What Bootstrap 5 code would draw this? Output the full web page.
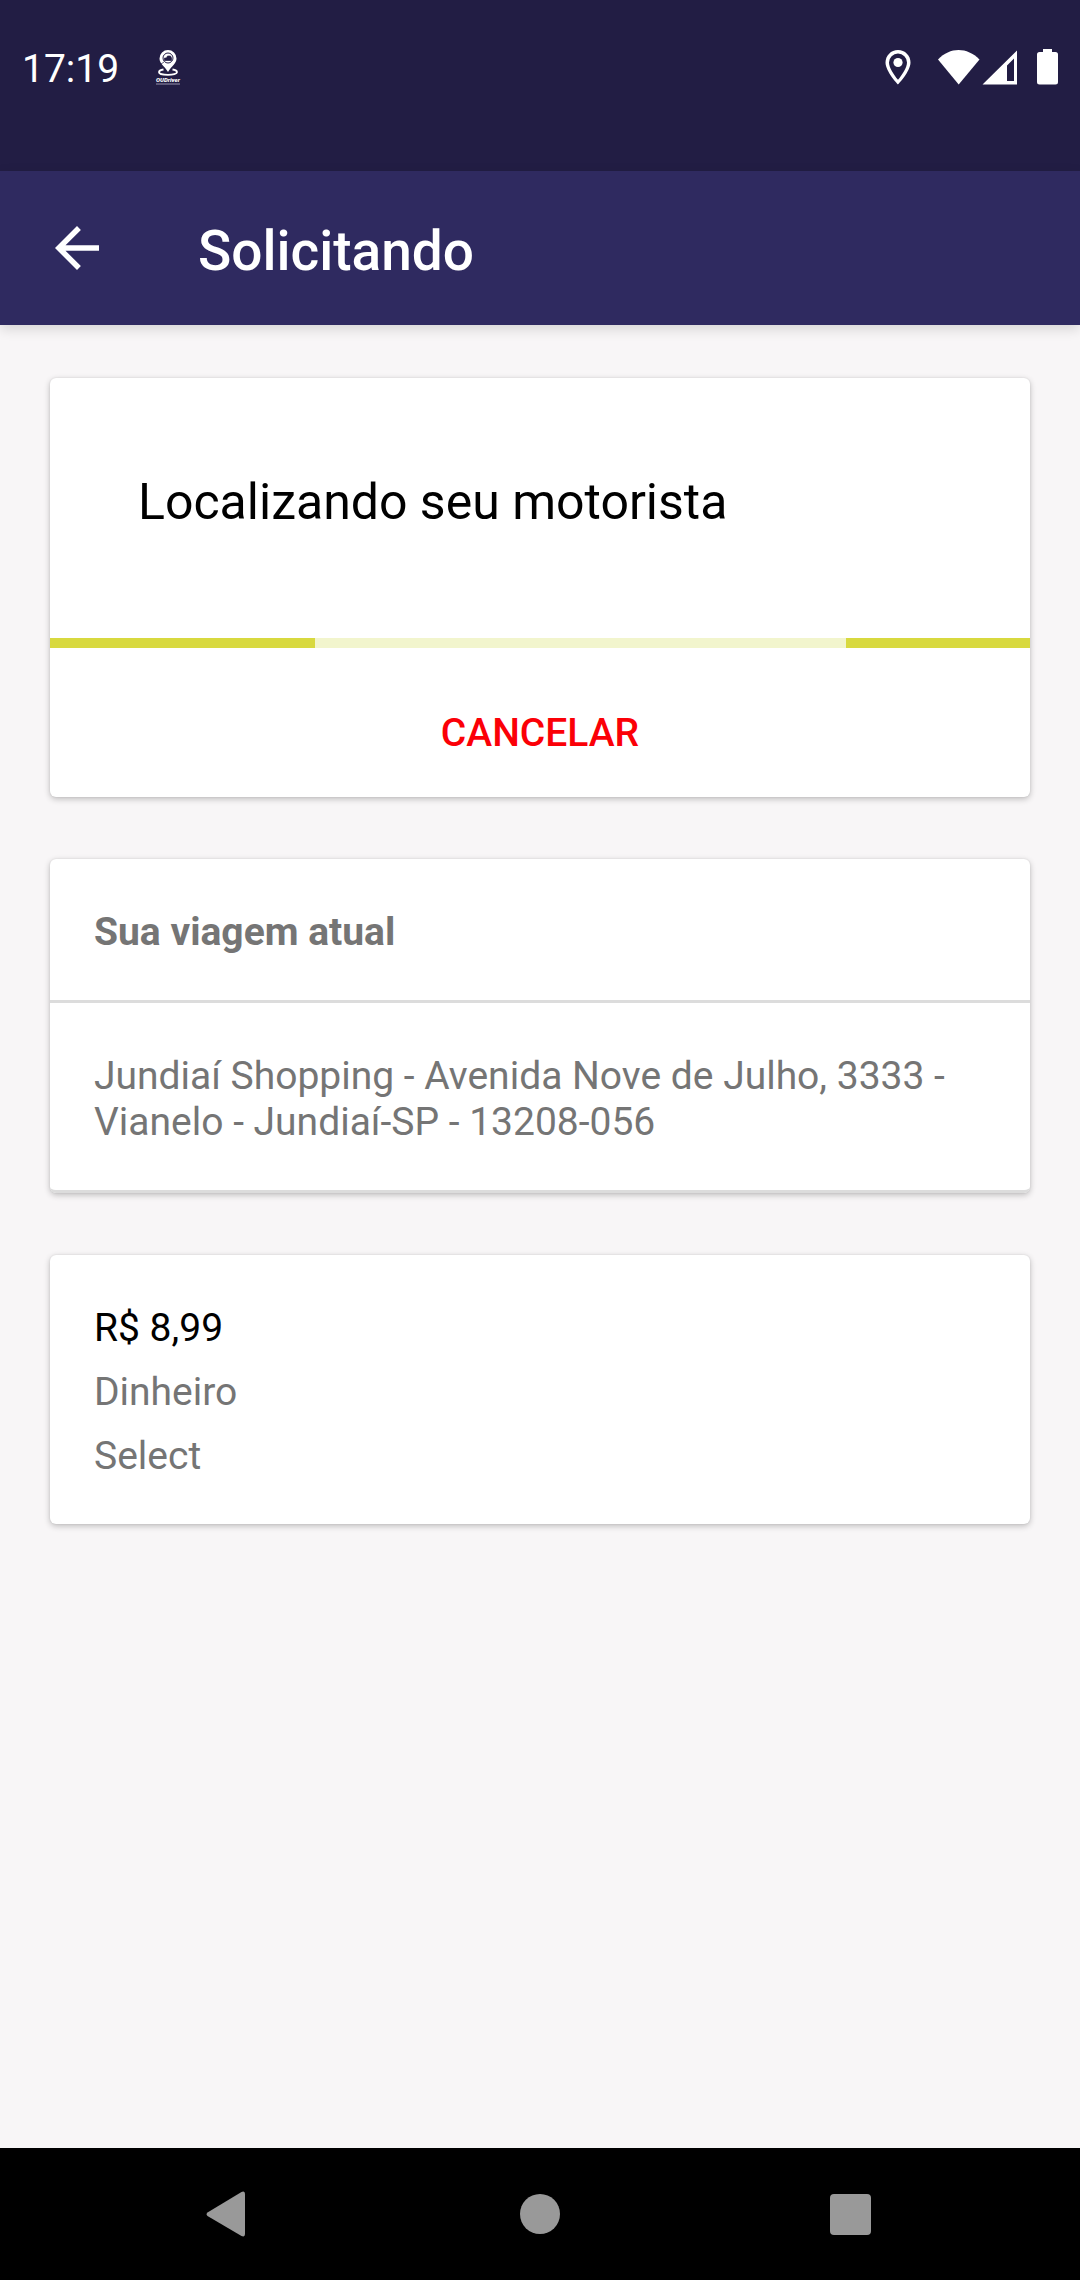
<!DOCTYPE html>
<html lang="pt-BR">
<head>
<meta charset="utf-8">
<meta name="viewport" content="width=device-width, initial-scale=1">
<title>Solicitando</title>
<link href="https://cdn.jsdelivr.net/npm/bootstrap@5.3.0/dist/css/bootstrap.min.css" rel="stylesheet">
<style>
  body { font-family: Roboto, "Noto Sans", sans-serif; font-size: 39px; line-height: 46px; background: #f8f6f7; color: #757575; }
  svg { display: block; flex: none; }
  .status-bar { background: #221d44; color: #fff; padding: 46px 22px 79px 22px; }
  .status-bar .icons-left { margin-left: 35px; }
  .app-bar { background: #2f2a60; color: #fff; height: 154px; padding: 0 44px; box-shadow: 0 4px 12px rgba(0,0,0,.14); }
  .app-bar h1 { font-size: 55px; line-height: 64px; font-weight: 500; padding-top: 6px; margin-left: 88px; }
  .back-link { width: 66px; height: 66px; color: #fff; }
  main { padding: 53px 50px; gap: 62px; }
  .panel { --bs-card-border-width: 0px; --bs-card-border-radius: 6px; --bs-card-color: #757575; box-shadow: 0 2px 6px rgba(0,0,0,.24), 0 0 2px rgba(0,0,0,.1); }
  .panel-part { padding: 50px 44px 45px; }
  .panel-rule { border-bottom: 3px solid #dcdcdc; }
  .panel-rule:last-child { border-radius: 0 0 6px 6px; }
  .panel h2, .panel p { font-size: 39px; line-height: 46px; }
  .panel .search-title { font-size: 50px; line-height: 58px; padding: 95px 88px 107px; color: #000; font-weight: 400; }
  .search-progress { height: 10px; border-radius: 0; background: #f2f5cd; }
  .search-progress .progress-bar { background: #d8d93f; }
  .cancel-btn { font-size: 39px; line-height: 46px; font-weight: 500; color: #fb0007; border: 0; border-radius: 0 0 6px 6px; padding: 62px 44px 41px; }
  .price { color: #000; }
  .details { gap: 18px; }
  .nav-bar { background: #000; height: 132px; padding: 0 75px; }
  .nav-bar .btn { color: #999; border: 0; }
</style>
</head>
<body>
<div class="d-flex flex-column min-vh-100">
  <div class="status-bar d-flex align-items-center justify-content-between">
    <div class="d-flex align-items-center">
      <span>17:19</span>
      <svg class="icons-left" width="30" height="40" viewBox="0 0 30 40" aria-hidden="true">
        <path d="M14 1a8.500 8.500 0 0 0-8.500 8.500c0 5 4.500 7 8.500 13.500 4-6.500 8.500-8.500 8.500-13.500A8.500 8.500 0 0 0 14 1z" fill="#fff"/>
        <circle cx="14" cy="9" r="5" fill="none" stroke="#221d44" stroke-width="1"/>
        <path d="M10.500 9h2l1-2h3l1 2v2.500h-7zM5.500 16l4.500-3" fill="#221d44" stroke="#221d44" stroke-width=".7"/>
        <path d="M9.500 20.500c-3 .5-4.500 1.400-4.500 2.700 0 1.500 4 2.600 9 2.600s9-1.100 9-2.600c0-1.300-1.500-2.200-4.500-2.700" fill="none" stroke="#fff" stroke-width="1.800"/>
        <text x="14" y="33" text-anchor="middle" font-size="6" font-weight="900" font-style="italic" fill="#fff">OUDriver</text>
        <path d="M2 35h24" stroke="#9793ad" stroke-width="1"/>
      </svg>
    </div>
    <svg width="176" height="40" viewBox="0 0 176 40" fill="#fff" role="img" aria-label="Localização, Wi-Fi, sinal e bateria">
      <path fill-rule="evenodd" d="M16 1C9 1 3.500 6.500 3.500 13.500 3.500 22.500 16 35.500 16 35.500s12.500-13 12.500-22C28.500 6.500 23 1 16 1zm0 3.500a9 9 0 0 1 9 9c0 5-5 12.500-9 17.300-4-4.800-9-12.300-9-17.300a9 9 0 0 1 9-9z"/>
      <circle cx="16" cy="13.500" r="4.600"/>
      <path d="M56 10.500C68-2.200 85-2.200 97.500 10.500L76.700 35.500z"/>
      <path fill-rule="evenodd" d="M135 1.500v34h-34.500zm-3 8-7 7V32h7z"/>
      <path d="M161 0h9v3h3.500a2.500 2.500 0 0 1 2.500 2.500V33a2.500 2.500 0 0 1-2.500 2.500h-16A2.500 2.500 0 0 1 155 33V5.500A2.500 2.500 0 0 1 157.500 3h3.500z"/>
    </svg>
  </div>

  <header class="app-bar d-flex align-items-center">
    <a class="back-link d-flex align-items-center justify-content-center" href="#" aria-label="Voltar">
      <svg width="66" height="66" viewBox="0 0 24 24" fill="currentColor"><path d="M20 11H7.830l5.590-5.590L12 4l-8 8 8 8 1.410-1.410L7.830 13H20z"/></svg>
    </a>
    <h1 class="mb-0">Solicitando</h1>
  </header>

  <main class="d-flex flex-column flex-grow-1">
    <section class="card panel">
      <h2 class="search-title mb-0">Localizando seu motorista</h2>
      <div class="progress search-progress justify-content-between" role="progressbar" aria-label="Localizando seu motorista">
        <div class="progress-bar" style="width: 27%"></div>
        <div class="progress-bar" style="width: 18.800%"></div>
      </div>
      <button type="button" class="btn cancel-btn w-100">CANCELAR</button>
    </section>

    <section class="card panel">
      <h2 class="panel-part panel-rule fw-bold mb-0">Sua viagem atual</h2>
      <p class="panel-part panel-rule mb-0">Jundiaí Shopping - Avenida Nove de Julho, 3333 - Vianelo - Jundiaí-SP - 13208-056</p>
    </section>

    <section class="card panel">
      <div class="panel-part details d-flex flex-column">
        <p class="price mb-0">R$ 8,99</p>
        <p class="mb-0">Dinheiro</p>
        <p class="mb-0">Select</p>
      </div>
    </section>
  </main>

  <nav class="nav-bar d-flex align-items-stretch" aria-label="Navegação do sistema">
    <button type="button" class="btn flex-fill d-flex align-items-center justify-content-center" aria-label="Voltar">
      <svg width="48" height="48" viewBox="0 0 48 48" fill="currentColor"><path d="M1.500 22.500 35.500 2q3.500-1.500 3.500 2.500v39q0 4-3.500 2.500L1.500 26q-2-1.700 0-3.500z"/></svg>
    </button>
    <button type="button" class="btn flex-fill d-flex align-items-center justify-content-center" aria-label="Início">
      <svg width="48" height="48" viewBox="0 0 48 48" fill="currentColor"><circle cx="24" cy="24" r="20"/></svg>
    </button>
    <button type="button" class="btn flex-fill d-flex align-items-center justify-content-center" aria-label="Recentes">
      <svg width="48" height="48" viewBox="0 0 48 48" fill="currentColor"><rect x="4" y="4" width="41" height="41" rx="4"/></svg>
    </button>
  </nav>
</div>
<script src="https://cdn.jsdelivr.net/npm/bootstrap@5.3.0/dist/js/bootstrap.bundle.min.js"></script>
</body>
</html>
